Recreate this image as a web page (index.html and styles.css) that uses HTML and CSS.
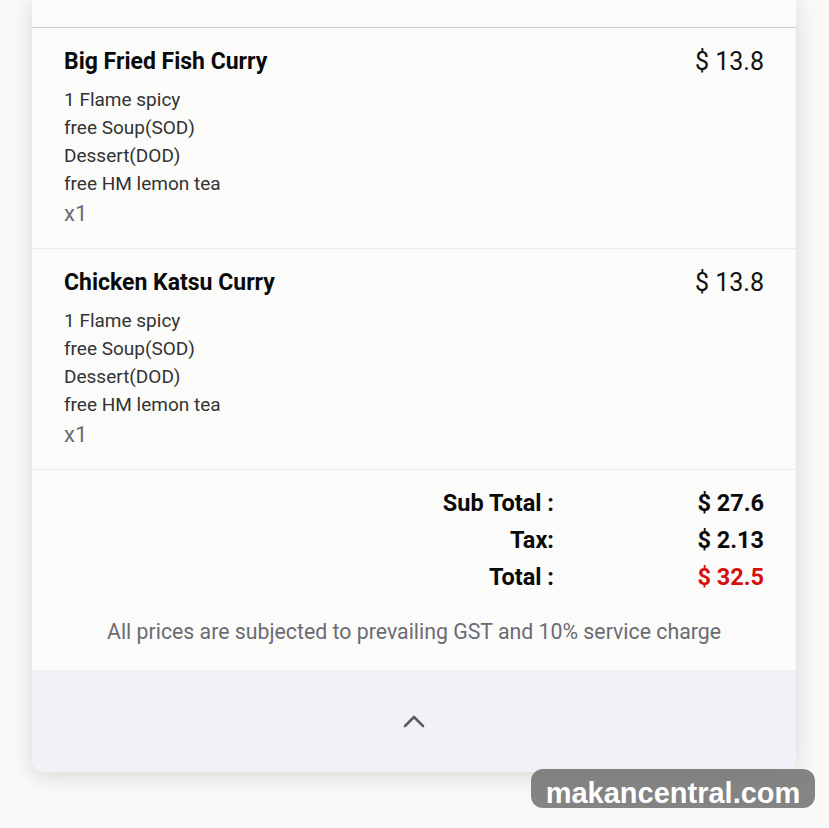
FILE: index.html
```html
<!DOCTYPE html>
<html lang="en">
<head>
<meta charset="UTF-8">
<meta name="viewport" content="width=device-width, initial-scale=1.0">
<title>Order Summary</title>
<link rel="stylesheet" href="styles.css">
</head>
<body>

<div class="card">
  <div class="cardTop"></div>

  <div class="item">
    <div class="itemHead">
      <div class="itemName">Big Fried Fish Curry</div>
      <div class="itemPrice">$ 13.8</div>
    </div>
    <div class="itemOpt">1 Flame spicy</div>
    <div class="itemOpt">free Soup(SOD)</div>
    <div class="itemOpt">Dessert(DOD)</div>
    <div class="itemOpt">free HM lemon tea</div>
    <div class="itemQty">x1</div>
  </div>

  <div class="item">
    <div class="itemHead">
      <div class="itemName">Chicken Katsu Curry</div>
      <div class="itemPrice">$ 13.8</div>
    </div>
    <div class="itemOpt">1 Flame spicy</div>
    <div class="itemOpt">free Soup(SOD)</div>
    <div class="itemOpt">Dessert(DOD)</div>
    <div class="itemOpt">free HM lemon tea</div>
    <div class="itemQty">x1</div>
  </div>

  <div class="totals">
    <div class="totalRow">
      <span class="totalLabel">Sub Total :</span>
      <span class="totalValue">$ 27.6</span>
    </div>
    <div class="totalRow">
      <span class="totalLabel">Tax:</span>
      <span class="totalValue">$ 2.13</span>
    </div>
    <div class="totalRow">
      <span class="totalLabel">Total :</span>
      <span class="totalValue grand">$ 32.5</span>
    </div>
    <p class="note">All prices are subjected to prevailing GST and 10% service charge</p>
  </div>

  <div class="cardFoot">
    <svg width="24" height="14" viewBox="0 0 24 14">
      <path d="M3 12 L12 3 L21 12" fill="none" stroke="#5c5c66" stroke-width="2.6" stroke-linecap="round" stroke-linejoin="round"/>
    </svg>
  </div>
</div>

<div class="watermark">makancentral.com</div>

</body>
</html>
```

FILE: styles.css
```css
body {
  margin: 0;
  background: #f9faf8;
  font-family: Roboto, "Noto Sans", sans-serif;
  color: #111;
}
.card {
  margin: 0 33px 56px 32px;
  background: #fbfcfa;
  border-radius: 0 0 12px 12px;
  box-shadow: 0 4px 22px rgba(0,0,0,0.14);
  overflow: hidden;
}
.cardTop {
  height: 27px;
  border-bottom: 1px solid #c9c9c9;
}
.item {
  padding: 16px 32px 18px;
  border-bottom: 1px solid #ebebeb;
}
.itemHead {
  display: flex;
  justify-content: space-between;
  align-items: center;
  height: 34px;
  margin-bottom: 8px;
}
.itemName {
  font-size: 23px;
  font-weight: 700;
  color: #0a0a0a;
}
.itemPrice {
  font-size: 25px;
  color: #111;
}
.itemOpt {
  font-size: 19px;
  line-height: 28px;
  color: #333;
}
.itemQty {
  font-size: 22px;
  line-height: 32px;
  color: #6b6b73;
}
.totals {
  padding: 15px 32px 20px;
}
.totalRow {
  display: flex;
  justify-content: flex-end;
  line-height: 37px;
  font-size: 23.5px;
  font-weight: 700;
  color: #0a0a0a;
}
.totalLabel {
  text-align: right;
}
.totalValue {
  width: 210px;
  text-align: right;
}
.totalValue.grand {
  color: #d70f0f;
}
.note {
  margin: 18px 0 0;
  text-align: center;
  font-size: 21.3px;
  line-height: 36px;
  color: #6b6b73;
}
.cardFoot {
  height: 102px;
  background: #f1f1f7;
  display: flex;
  align-items: center;
  justify-content: center;
}
.watermark {
  position: absolute;
  left: 531px;
  top: 769px;
  width: 284px;
  height: 39px;
  box-sizing: border-box;
  display: flex;
  align-items: flex-end;
  justify-content: center;
  border-radius: 12px;
  background: rgba(110,110,110,0.85);
  color: #fff;
  font-family: "Liberation Sans", Arial, sans-serif;
  font-weight: 700;
  font-size: 29px;
  line-height: 29px;
}
```
